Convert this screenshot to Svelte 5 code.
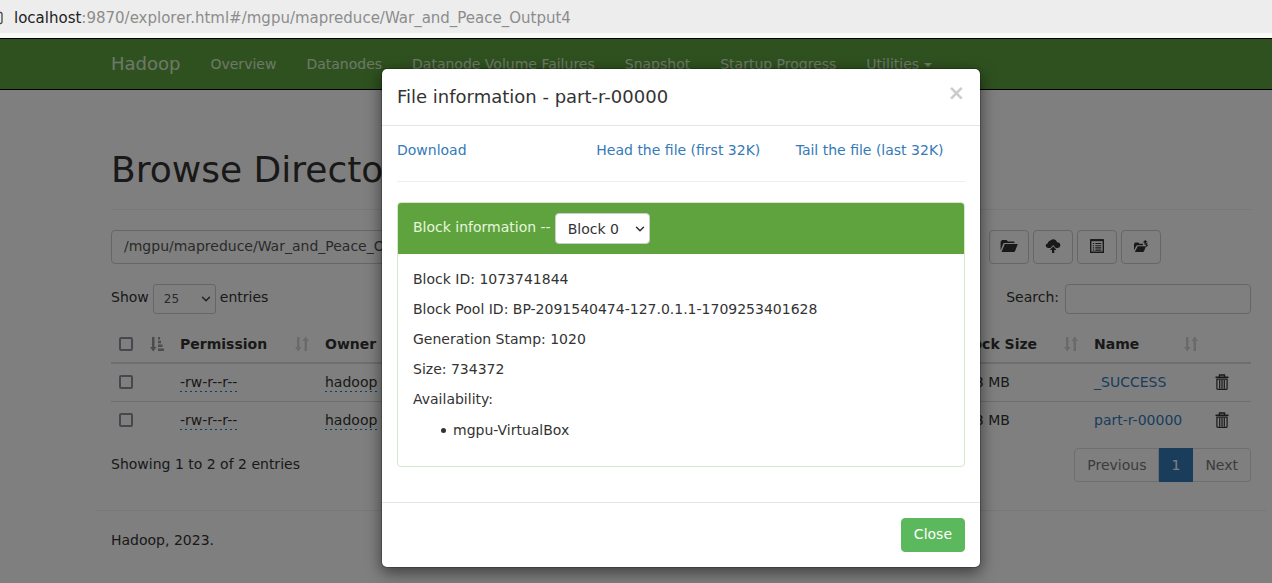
<script>
  const navLinks = ['Overview', 'Datanodes', 'Datanode Volume Failures', 'Snapshot', 'Startup Progress'];
  const columns = ['Permission', 'Owner', 'Group', 'Size', 'Last Modified', 'Replication', 'Block Size', 'Name'];
  const files = [
    { owner: 'hadoop', group: 'supergroup', size: '0 B', modified: 'Mar 01', name: '_SUCCESS' },
    { owner: 'hadoop', group: 'supergroup', size: '717 KB', modified: 'Mar 01', name: 'part-r-00000' }
  ];
  const blockFacts = [
    'Block ID: 1073741844',
    'Block Pool ID: BP-2091540474-127.0.1.1-1709253401628',
    'Generation Stamp: 1020',
    'Size: 734372',
    'Availability:'
  ];
  let path = $state('/mgpu/mapreduce/War_and_Peace_Output4');
  let query = $state('');
  let open = $state(true);
</script>

{#snippet chevron()}
  <svg class="chevron" viewBox="0 0 10 10" width="10" height="10" aria-hidden="true">
    <path d="M1.5 3.2 5 6.8 8.5 3.2" fill="none" stroke="currentColor" stroke-width="1.5" stroke-linecap="round" stroke-linejoin="round" />
  </svg>
{/snippet}

{#snippet sortBoth()}
  <svg class="sort" viewBox="0 0 14 16" width="14" height="16" aria-hidden="true">
    <path d="M2 1h2.5v10H6.500L3.250 15.500 0 11h2zM9.500 15H12V5h2L10.750.5 7.500 5h2z" fill="currentColor" />
  </svg>
{/snippet}

<div class="address">
  <svg class="lock" viewBox="0 0 3 14" width="3" height="14" aria-hidden="true">
    <path d="M0 1.500h.5q1.500 0 1.500 1.500v8q0 1.500-1.500 1.500H0" fill="none" stroke="#444" stroke-width="1.300" />
  </svg>
  <span class="url"><span class="host">localhost</span>:9870/explorer.html#/mgpu/mapreduce/War_and_Peace_Output4</span>
</div>

<div class="page">
  <nav class="navbar">
    <div class="container nav-items">
      <a class="brand" href="#top">Hadoop</a>
      {#each navLinks as link}
        <a href="#{link}">{link}</a>
      {/each}
      <a href="#utilities">Utilities <span class="caret"></span></a>
    </div>
  </nav>

  <main class="container">
    <h1>Browse Directory</h1>

    <form class="path-row" onsubmit={(e) => e.preventDefault()}>
      <input class="control path" aria-label="Directory" bind:value={path} />
      <button class="control go">Go!</button>
      <div class="tools">
        <button class="control" type="button" aria-label="Create directory">
          <svg viewBox="0 0 18 14" width="18" height="14"><path d="M.6 11.500V2.800L2 1h4.500l1.500 1.600h5.500q1 0 1 1V4H4.500q-1 0-1.300.8zM4.800 5H17.800L15 12.200q-.3.8-1.200.8H1.500z" fill="currentColor" /></svg>
        </button>
        <button class="control" type="button" aria-label="Upload files">
          <svg viewBox="0 0 16 14" width="16" height="14"><path d="M5.500 9H3.200Q.7 8.700.7 6.400.8 4.500 2.900 4.200 3 2 5 1.800 6.100.3 8.200.3q3 .1 3.800 3 3.200 0 3.400 2.900-.1 2.500-2.800 2.800H10.800L8.200 5.900z" fill="currentColor" /><path d="M8.200 7.300 11.500 10.900H9.300V14H7V10.900H4.900z" fill="currentColor" /></svg>
        </button>
        <button class="control" type="button" aria-label="Cut files">
          <svg viewBox="0 0 14 14" width="14" height="14"><path d="M.7.9h12.600v12.400H.7z" fill="none" stroke="currentColor" stroke-width="1.400" /><path d="M.7 1.200h12.600" stroke="currentColor" stroke-width="2" /><path d="M2.800 4.500h1.400M2.800 6.700h1.400M2.800 8.900h1.400M2.800 11.100h1.400M5.300 4.500h6M5.300 6.700h6M5.300 8.900h6M5.300 11.100h6" stroke="currentColor" stroke-width="1.100" /></svg>
        </button>
        <button class="control" type="button" aria-label="Parent directory">
          <svg viewBox="0 0 16 14" width="16" height="14"><path d="M1 11.500V5L2 3.600h3.300L6.500 4.700H10V6.200H4.500q-1 0-1.300.8zM4.800 7.200H13L11 12.200q-.3.800-1.200.8H1.800z" fill="currentColor" /><path d="M12.200 1 14.800 3.200H13.200V5.700H11.400V3.200H9.800zM13 8.200 15.300 6H14.300V4H12.800V6z" fill="currentColor" /></svg>
        </button>
      </div>
    </form>

    <div class="filters">
      <label>Show
        <span class="select small">
          <select class="control"><option>25</option><option>50</option><option>100</option></select>
          {@render chevron()}
        </span>
        entries</label>
      <label class="search-label">Search: <input class="control search" type="search" bind:value={query} /></label>
    </div>

    <table>
      <colgroup>
        <col class="c-check" /><col class="c-perm" /><col class="c-owner" /><col class="c-group" /><col class="c-size" /><col /><col /><col class="c-block" /><col class="c-name" /><col class="c-del" />
      </colgroup>
      <thead>
        <tr>
          <th>
            <div class="head">
              <input type="checkbox" aria-label="Select all" />
              <svg class="sort active" viewBox="0 0 14 16" width="14" height="16" aria-hidden="true">
                <path d="M2 1h2.500v10H6.500L3.250 15.500 0 11h2zM8 1h2v2.500H8zM8 4.800h3v2.500H8zM8 8.600h4.500v2.500H8zM8 12.400h6v2.500H8z" fill="currentColor" />
              </svg>
            </div>
          </th>
          {#each columns as column}
            <th><div class="head">{column}{@render sortBoth()}</div></th>
          {/each}
          <th aria-label="Delete"></th>
        </tr>
      </thead>
      <tbody>
        {#each files as file}
          <tr>
            <td><input type="checkbox" aria-label="Select {file.name}" /></td>
            <td><span class="editable">-rw-r--r--</span></td>
            <td><span class="editable">{file.owner}</span></td>
            <td><span class="editable">{file.group}</span></td>
            <td>{file.size}</td>
            <td>{file.modified}</td>
            <td><span class="editable">1</span></td>
            <td>128 MB</td>
            <td><a href="#{file.name}">{file.name}</a></td>
            <td>
              <button class="trash" aria-label="Delete {file.name}">
                <svg viewBox="0 0 14 16" width="14" height="16">
                  <path d="M4.500 2.800V1h5v1.800M.5 3.200h13" fill="none" stroke="currentColor" stroke-width="1.400" />
                  <path d="M1.900 5.200h10.200v9.200q0 .9-.9.900H2.800q-.9 0-.9-.9zM4.700 6v8.500M7 6v8.500M9.300 6v8.500" fill="none" stroke="currentColor" stroke-width="1.200" />
                </svg>
              </button>
            </td>
          </tr>
        {/each}
      </tbody>
    </table>

    <div class="pager-row">
      <span>Showing 1 to 2 of 2 entries</span>
      <div class="pager">
        <a href="#previous">Previous</a><a class="current" href="#1">1</a><a href="#next">Next</a>
      </div>
    </div>
  </main>

  <footer>Hadoop, 2023.</footer>

  {#if open}
    <div class="backdrop">
      <div class="modal" role="dialog" aria-labelledby="modal-title">
        <header>
          <h4 id="modal-title">File information - part-r-00000</h4>
          <button class="dismiss" aria-label="Dismiss" onclick={() => (open = false)}>×</button>
        </header>
        <div class="modal-body">
          <div class="links">
            <a href="#download">Download</a>
            <a href="#head">Head the file (first 32K)</a>
            <a href="#tail">Tail the file (last 32K)</a>
          </div>
          <hr />
          <section class="panel">
            <div class="panel-heading">
              <label for="block">Block information --</label>
              <span class="select">
                <select id="block" class="control"><option>Block 0</option></select>
                {@render chevron()}
              </span>
            </div>
            <div class="panel-body">
              {#each blockFacts as fact}
                <p>{fact}</p>
              {/each}
              <ul><li>mgpu-VirtualBox</li></ul>
            </div>
          </section>
        </div>
        <div class="modal-footer">
          <button class="close" onclick={() => (open = false)}>Close</button>
        </div>
      </div>
    </div>
  {/if}
</div>

<style>
  :global(body) {
    font: 14px/20px 'DejaVu Sans', sans-serif;
    color: #333;
    background: #fff;
  }
  :global(#app) {
    display: flex;
    flex-direction: column;
    min-height: 100vh;
  }
  * { box-sizing: border-box; }
  a { color: #337ab7; text-decoration: none; }
  button, input, select { font: inherit; color: inherit; margin: 0; }
  svg { display: block; flex: none; }

  .address {
    display: flex;
    align-items: center;
    gap: 11px;
    height: 38px;
    padding-top: 2px;
    background: #ededed;
    border-bottom: 5px solid #f8faf8;
    font-size: 15px;
    color: #8c8c8c;
    white-space: nowrap;
  }
  .host { color: #222; }

  .page {
    position: relative;
    flex: 1;
    padding-left: 90px;
    overflow: hidden;
  }
  .container {
    max-width: 1170px;
    margin: 0 auto;
    padding: 0 15px;
  }
  .navbar {
    margin-left: -90px;
    padding-left: 90px;
    background: #5fa33e;
    border: solid #000;
    border-width: 1px 0;
  }
  .nav-items { display: flex; height: 50px; align-items: center; }
  .nav-items a { padding: 0 15px; color: #dcf0d3; white-space: nowrap; }
  .nav-items .brand { padding-left: 0; font-size: 18px; }
  .caret {
    display: inline-block;
    vertical-align: middle;
    border: 4px solid transparent;
    border-top-color: currentColor;
    border-bottom: 0;
  }

  h1 {
    margin: 60px 0 20px;
    padding-bottom: 19px;
    border-bottom: 1px solid #eee;
    font-size: 36px;
    line-height: 40px;
    font-weight: 500;
  }
  .control {
    height: 34px;
    padding: 6px 12px;
    background: #fff;
    border: 1px solid #ccc;
    border-radius: 4px;
  }
  .path-row { display: flex; }
  .path { flex: 1; padding-bottom: 8px; color: #555; }
  .go { margin-right: 15px; }
  .tools { display: flex; gap: 4px; padding-right: 90px; }
  .tools .control {
    display: flex;
    justify-content: center;
    align-items: center;
    width: 40px;
    padding: 0 0 2px;
  }

  .filters { display: flex; justify-content: space-between; margin-top: 20px; }
  .filters label { display: flex; gap: 4px; height: 30px; line-height: 26px; }
  .filters .search-label { gap: 6px; }
  .filters .search { width: 186px; height: 30px; }
  .select { display: inline-grid; align-items: center; }
  .select > :global(*) { grid-area: 1 / 1; }
  .select select { height: 31px; padding: 4px 29px 4px 12px; line-height: 20px; appearance: none; }
  .select .chevron { justify-self: end; margin-right: 5px; pointer-events: none; }
  .small select { width: 63px; height: 30px; padding: 0 10px; font-size: 12px; color: #555; border-radius: 3px; }
  .small .chevron { color: #444; }

  table { width: 100%; margin-top: 11px; border-collapse: collapse; table-layout: fixed; white-space: nowrap; }
  .c-check { width: 61px; }
  .c-perm { width: 145px; }
  .c-owner { width: 100px; }
  .c-group { width: 110px; }
  .c-size { width: 90px; }
  .c-block { width: 137px; }
  .c-name { width: 120px; }
  .c-del { width: 45px; }
  th, td { height: 38px; padding: 8px; text-align: left; }
  th { border-bottom: 2px solid #ddd; }
  td { border-top: 1px solid #ddd; }
  .head { display: flex; align-items: center; justify-content: space-between; height: 20px; }
  .sort { opacity: 0.2; }
  .sort.active { opacity: 0.5; }
  input[type='checkbox'] {
    display: block;
    width: 14px;
    height: 14px;
    appearance: none;
    background: #fff;
    border: 2px solid #8f8f9d;
    border-radius: 2px;
  }
  .editable {
    padding-bottom: 2px;
    background: repeating-linear-gradient(90deg, #08c 0 2px, transparent 2px 5px) bottom / 100% 1px no-repeat;
  }
  .trash { display: block; padding: 0 1px; border: 0; background: none; }

  .pager-row { display: flex; justify-content: space-between; margin-top: 9px; line-height: 32px; }
  .pager { display: flex; line-height: 20px; }
  .pager a { padding: 6px 12px; border: 1px solid #ddd; border-left-width: 0; color: #777; }
  .pager a:first-child { border-left-width: 1px; border-radius: 4px 0 0 4px; }
  .pager a:last-child { border-radius: 0 4px 4px 0; }
  .pager .current { background: #337ab7; border-color: #337ab7; color: #fff; }
  footer {
    max-width: 1170px;
    margin: 28px auto 0;
    padding: 19px 15px;
    border-top: 1px solid #eee;
  }

  .backdrop {
    position: absolute;
    inset: 0;
    padding: 30px 0 0 90px;
    background: rgba(0, 0, 0, 0.5);
  }
  .modal {
    max-width: 600px;
    margin: 0 auto;
    background: #fff;
    background-clip: padding-box;
    border: 1px solid rgba(0, 0, 0, 0.2);
    border-radius: 6px;
    box-shadow: 0 5px 15px rgba(0, 0, 0, 0.5);
  }
  header {
    display: flex;
    justify-content: space-between;
    align-items: flex-start;
    padding: 15px;
    border-bottom: 1px solid #e5e5e5;
  }
  h4 { margin: 0; font-size: 18px; line-height: 26px; font-weight: 500; }
  .dismiss {
    padding: 0;
    border: 0;
    background: none;
    font-size: 21px;
    line-height: 18px;
    font-weight: 700;
    opacity: 0.2;
    color: #000;
  }
  .modal-body { padding: 15px; }
  .links { display: grid; grid-template-columns: repeat(3, 1fr); gap: 30px; height: 20px; line-height: 18px; white-space: nowrap; }
  hr { margin: 20px 0; border: 0; border-top: 1px solid #eee; }
  .panel { margin-bottom: 20px; border: 1px solid #d6e9c6; border-radius: 4px; }
  .panel-heading {
    display: flex;
    gap: 4px;
    padding: 10px 15px;
    background: #5fa33e;
    border-radius: 3px 3px 0 0;
  }
  .panel-heading label { color: #e6f6df; line-height: 28px; }
  .panel-body { padding: 15px; }
  p { margin: 0 0 10px; }
  ul { margin: 0 0 10px; padding-left: 28px; list-style: none; }
  li { display: flex; align-items: center; gap: 7px; line-height: 22px; }
  li::before {
    content: '';
    width: 5px;
    height: 5px;
    border-radius: 50%;
    background: currentColor;
  }
  .modal-footer { display: flex; justify-content: flex-end; padding: 15px; border-top: 1px solid #e5e5e5; }
  .close {
    height: 34px;
    padding: 0 12px 2px;
    color: #fff;
    background: #5cb85c;
    border: 1px solid #5cb85c;
    border-radius: 4px;
  }
</style>
